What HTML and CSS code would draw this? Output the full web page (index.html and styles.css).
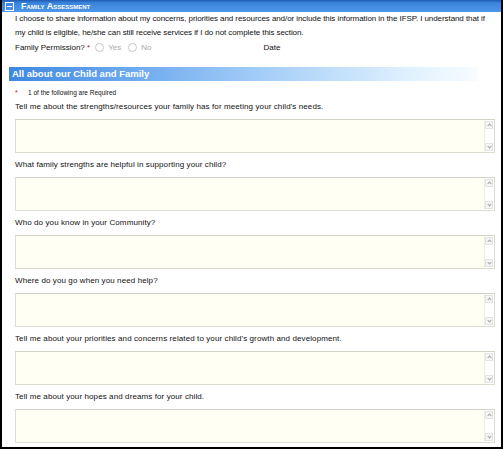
FILE: index.html
```html
<!DOCTYPE html>
<html>
<head>
<meta charset="utf-8">
<link rel="stylesheet" href="styles.css">
</head>
<body>
<div class="panel">
  <div class="titlebar">
    <span class="collapse"><span class="minus"></span></span>
    <span class="title">Family Assessment</span>
  </div>
  <div class="content">
    <p class="intro">I choose to share information about my concerns, priorities and resources and/or include this information in the IFSP. I understand that if my child is eligible, he/she can still receive services if I do not complete this section.</p>
    <div class="perm-row">
      <span class="perm-label">Family Permission? <span class="req">*</span></span>
      <span class="radio"></span><span class="opt">Yes</span>
      <span class="radio"></span><span class="opt">No</span>
      <span class="date">Date</span>
    </div>
    <div class="band">All about our Child and Family</div>
    <div class="required"><span class="req">*</span><span class="req-text">1 of the following are Required</span></div>

    <div class="question">
      <div class="q-label">Tell me about the strengths/resources your family has for meeting your child's needs.</div>
      <div class="field"><textarea class="area"></textarea><div class="scroll"><span class="arrow up"></span><span class="arrow down"></span></div></div>
    </div>
    <div class="question">
      <div class="q-label">What family strengths are helpful in supporting your child?</div>
      <div class="field"><textarea class="area"></textarea><div class="scroll"><span class="arrow up"></span><span class="arrow down"></span></div></div>
    </div>
    <div class="question">
      <div class="q-label">Who do you know in your Community?</div>
      <div class="field"><textarea class="area"></textarea><div class="scroll"><span class="arrow up"></span><span class="arrow down"></span></div></div>
    </div>
    <div class="question">
      <div class="q-label">Where do you go when you need help?</div>
      <div class="field"><textarea class="area"></textarea><div class="scroll"><span class="arrow up"></span><span class="arrow down"></span></div></div>
    </div>
    <div class="question">
      <div class="q-label">Tell me about your priorities and concerns related to your child's growth and development.</div>
      <div class="field"><textarea class="area"></textarea><div class="scroll"><span class="arrow up"></span><span class="arrow down"></span></div></div>
    </div>
    <div class="question">
      <div class="q-label">Tell me about your hopes and dreams for your child.</div>
      <div class="field"><textarea class="area"></textarea><div class="scroll"><span class="arrow up"></span><span class="arrow down"></span></div></div>
    </div>
  </div>
</div>
</body>
</html>
```
FILE: styles.css
```css
html, body {
  margin: 0;
  padding: 0;
  background: #ffffff;
}
body {
  font-family: "Liberation Sans", Arial, sans-serif;
  font-size: 8px;
  color: #111;
}
.panel {
  width: 503px;
  height: 449px;
  box-sizing: border-box;
  border-left: 2px solid #000;
  border-right: 2px solid #000;
  border-bottom: 2px solid #000;
  overflow: hidden;
}
.titlebar {
  height: 12px;
  background: linear-gradient(#1f5cb4 0px, #3a84dc 3px, #4f97ea 12px);
  display: flex;
  align-items: center;
  padding-left: 3px;
  color: #fff;
}
.collapse {
  width: 7px;
  height: 7px;
  border: 1px solid #fff;
  display: flex;
  align-items: center;
  justify-content: center;
}
.minus {
  width: 5px;
  height: 1px;
  background: #fff;
}
.title {
  margin-left: 7px;
  font-variant: small-caps;
  font-weight: bold;
  font-size: 9px;
}
.content {
  padding: 0 6px 0 13px;
}
.intro {
  margin: 0;
  line-height: 14px;
  width: 472px;
  letter-spacing: -0.08px;
}
.perm-row {
  height: 14px;
  display: flex;
  align-items: center;
}
.perm-label {
  margin-right: 5px;
}
.req {
  color: #c0102a;
}
.radio {
  width: 7px;
  height: 7px;
  border: 1px solid #c8c8c8;
  border-radius: 50%;
  background: #fff;
  margin-right: 4px;
}
.opt {
  color: #a8a8a8;
  margin-right: 7px;
}
.date {
  margin-left: 105px;
}
.band {
  margin-top: 13px;
  margin-left: -6px;
  width: 468px;
  height: 14px;
  line-height: 14px;
  padding-left: 3px;
  box-sizing: border-box;
  background: linear-gradient(90deg, #3f88e0 0%, #6aa8ee 25%, #a6cef8 55%, #def0fe 85%, #f8fcff 100%);
  color: #fff;
  font-weight: bold;
  font-size: 9.5px;
}
.required {
  margin-top: 5px;
  height: 12px;
  display: flex;
  align-items: center;
  font-size: 6.5px;
}
.required .req {
  font-size: 7px;
  width: 13px;
}
.question {
  padding-top: 2px;
}
.q-label {
  height: 14px;
  line-height: 14px;
  letter-spacing: 0.1px;
}
.question + .question {
  padding-top: 5px;
}
.field {
  margin-top: 5px;
  height: 34px;
  box-sizing: border-box;
  border: 1px solid #dcdcd2;
  border-top-color: #d2d2c8;
  display: flex;
  background: #fffff4;
}
.area {
  flex: 1;
  border: none;
  margin: 0;
  padding: 0;
  resize: none;
  outline: none;
  background: transparent;
}
.scroll {
  width: 9px;
  background: #fff;
  border-left: 1px solid #ececec;
  display: flex;
  flex-direction: column;
  justify-content: space-between;
  padding: 1px 0;
}
.arrow {
  position: relative;
  display: block;
  width: 8px;
  height: 8px;
  box-sizing: border-box;
  border: 1px solid #e2e2e2;
  background: #f6f6f6;
}
.arrow::after {
  content: "";
  position: absolute;
  left: 2px;
  width: 2px;
  height: 2px;
  border-left: 1px solid #a0a0a0;
  border-top: 1px solid #a0a0a0;
}
.arrow.up::after {
  top: 2px;
  transform: rotate(45deg);
}
.arrow.down::after {
  top: 1px;
  transform: rotate(225deg);
}
```
